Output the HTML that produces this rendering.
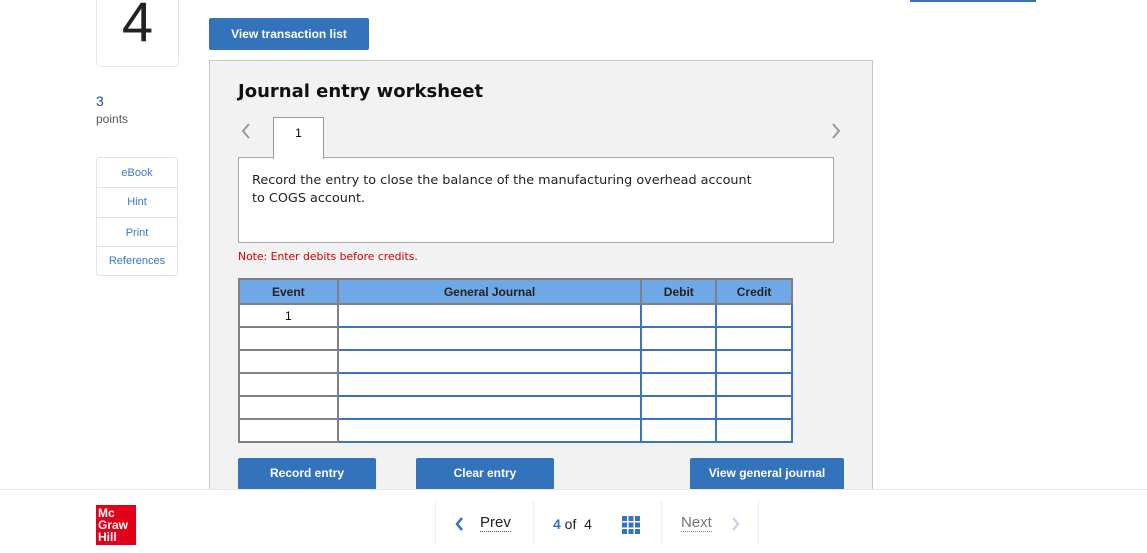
<!DOCTYPE html>
<html><head><meta charset="utf-8"><style>
*{box-sizing:border-box;margin:0;padding:0}
body{width:1147px;height:553px;background:#fff;position:relative;overflow:hidden;font-family:"Liberation Sans",Arial,sans-serif}
.abs{position:absolute}
.btn{position:absolute;background:#3373bb;color:#fff;font-weight:bold;font-size:12px;text-align:center;border-radius:2px}
.v{font-family:"DejaVu Sans",Verdana,sans-serif}
table{border-collapse:collapse}
td{border:2px solid #808080;height:23px;padding:0}
</style></head><body>
<div class="abs" style="left:910px;top:0;width:126px;height:2px;background:#3373bb"></div>
<div class="abs" style="left:96px;top:-10px;width:83px;height:77px;border:1px solid #e6e6e6;border-radius:5px;text-align:center;font-size:56px;line-height:62px;color:#222">4</div>
<div class="abs" style="left:96px;top:93px;font-size:14px;color:#1a4f9c">3</div>
<div class="abs" style="left:96px;top:112px;font-size:12px;color:#555">points</div>
<div class="abs" style="left:96px;top:157px;width:82px;height:119px;border:1px solid #e3e3e3;border-radius:3px;font-size:11px;color:#3a78c2;text-align:center">
<div style="height:30px;line-height:30px;border-bottom:1px solid #e3e3e3">eBook</div>
<div style="height:30px;line-height:28px;border-bottom:1px solid #e3e3e3">Hint</div>
<div style="height:29px;line-height:30px;border-bottom:1px solid #e3e3e3">Print</div>
<div style="height:28px;line-height:28px">References</div></div>
<div class="btn" style="left:209px;top:18px;width:160px;height:32px;line-height:32px">View transaction list</div>
<div class="abs" style="left:209px;top:60px;width:664px;height:434px;background:#f2f2f2;border:1px solid #c8c8c8;border-bottom:none"></div>
<div class="abs v" style="left:238px;top:81px;font-size:18px;font-weight:bold;color:#111">Journal entry worksheet</div>
<svg class="abs" style="left:240px;top:123px" width="12" height="16"><path d="M9 1 L3 8 L9 15" fill="none" stroke="#999" stroke-width="2"/></svg>
<svg class="abs" style="left:830px;top:123px" width="12" height="16"><path d="M3 1 L9 8 L3 15" fill="none" stroke="#999" stroke-width="2"/></svg>
<div class="abs" style="left:238px;top:157px;width:596px;height:86px;background:#fff;border:1px solid #aaa"></div>
<div class="abs" style="left:273px;top:117px;width:51px;height:42px;background:#fff;border:1px solid #999;border-bottom:none;text-align:center;font-size:12px;line-height:30px">1</div>
<div class="abs v" style="left:252px;top:172px;font-size:12.8px;line-height:18px;color:#222">Record the entry to close the balance of the manufacturing overhead account<br>to COGS account.</div>
<div class="abs v" style="left:238px;top:250px;font-size:10.8px;color:#c00">Note: Enter debits before credits.</div>
<table class="abs" style="left:238px;top:278px;width:555px;font-size:12px">
<tr style="background:#6fa8e6;font-weight:bold;color:#222;text-align:center"><td style="width:99px;height:25px">Event</td><td style="width:305px">General Journal</td><td style="width:75px">Debit</td><td style="width:76px">Credit</td></tr>
<tr><td style="text-align:center;background:#fff">1</td><td style="border-color:#3a74c0;background:#fff"></td><td style="border-color:#3a74c0;background:#fff"></td><td style="border-color:#3a74c0;background:#fff"></td></tr>
<tr><td style="background:#fff"></td><td style="border-color:#3a74c0;background:#fff"></td><td style="border-color:#3a74c0;background:#fff"></td><td style="border-color:#3a74c0;background:#fff"></td></tr>
<tr><td style="background:#fff"></td><td style="border-color:#3a74c0;background:#fff"></td><td style="border-color:#3a74c0;background:#fff"></td><td style="border-color:#3a74c0;background:#fff"></td></tr>
<tr><td style="background:#fff"></td><td style="border-color:#3a74c0;background:#fff"></td><td style="border-color:#3a74c0;background:#fff"></td><td style="border-color:#3a74c0;background:#fff"></td></tr>
<tr><td style="background:#fff"></td><td style="border-color:#3a74c0;background:#fff"></td><td style="border-color:#3a74c0;background:#fff"></td><td style="border-color:#3a74c0;background:#fff"></td></tr>
<tr><td style="background:#fff"></td><td style="border-color:#3a74c0;background:#fff"></td><td style="border-color:#3a74c0;background:#fff"></td><td style="border-color:#3a74c0;background:#fff"></td></tr>
</table>
<div class="btn" style="left:238px;top:458px;width:138px;height:32px;line-height:31px">Record entry</div>
<div class="btn" style="left:416px;top:458px;width:138px;height:32px;line-height:31px">Clear entry</div>
<div class="btn" style="left:690px;top:458px;width:154px;height:32px;line-height:31px">View general journal</div>
<div class="abs" style="left:0;top:489px;width:1147px;height:64px;background:#fff;border-top:1px solid #e8e8e8"></div>
<div class="abs" style="left:96px;top:505px;width:40px;height:40px;background:#e2001a;color:#fff;font-weight:bold;font-size:12px;line-height:12px;padding:2px 0 0 2px">Mc<br>Graw<br>Hill</div>
<div class="abs" style="left:435px;top:500px;width:1px;height:44px;background:#eee"></div>
<div class="abs" style="left:533px;top:500px;width:1px;height:44px;background:#eee"></div>
<div class="abs" style="left:661px;top:500px;width:1px;height:44px;background:#eee"></div>
<div class="abs" style="left:758px;top:500px;width:1px;height:44px;background:#eee"></div>
<svg class="abs" style="left:455px;top:517px" width="10" height="14"><path d="M7 1 L2 7 L7 13" fill="none" stroke="#3373bb" stroke-width="2.5"/></svg>
<div class="abs" style="left:480px;top:515px;font-size:15px;color:#222;border-bottom:1px dotted #555;line-height:16px">Prev</div>
<div class="abs" style="left:553px;top:516px;font-size:14px;color:#222"><b style="color:#3373bb">4</b> of &nbsp;4</div>
<svg class="abs" style="left:622px;top:516px" width="18" height="18"><g fill="#3373bb"><rect x="0" y="0" width="5" height="5"/><rect x="6.5" y="0" width="5" height="5"/><rect x="13" y="0" width="5" height="5"/><rect x="0" y="6.5" width="5" height="5"/><rect x="6.5" y="6.5" width="5" height="5"/><rect x="13" y="6.5" width="5" height="5"/><rect x="0" y="13" width="5" height="5"/><rect x="6.5" y="13" width="5" height="5"/><rect x="13" y="13" width="5" height="5"/></g></svg>
<div class="abs" style="left:681px;top:515px;font-size:15px;color:#777;border-bottom:1px dotted #888;line-height:16px">Next</div>
<svg class="abs" style="left:730px;top:517px" width="10" height="14"><path d="M3 1 L8 7 L3 13" fill="none" stroke="#c5d8ee" stroke-width="2.5"/></svg>
</body></html>
